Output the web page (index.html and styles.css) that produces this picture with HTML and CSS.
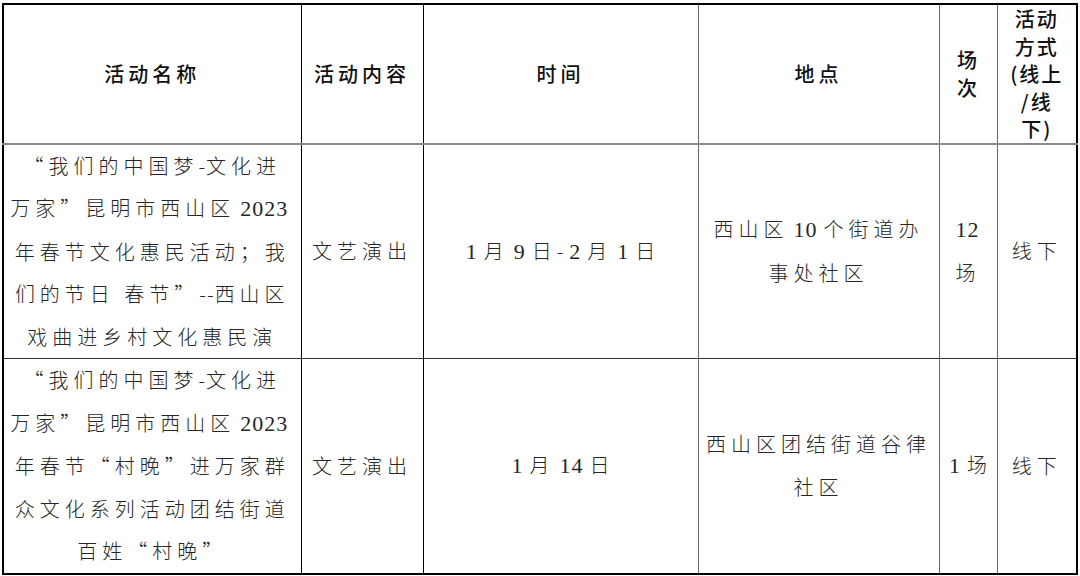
FILE: index.html
```html
<!DOCTYPE html>
<html lang="zh-CN">
<head>
<meta charset="utf-8">
<title>活动表</title>
<link rel="stylesheet" href="styles.css">
</head>
<body>
<table class="sheet">
  <colgroup>
    <col class="c-name">
    <col class="c-content">
    <col class="c-time">
    <col class="c-place">
    <col class="c-count">
    <col class="c-mode">
  </colgroup>
  <thead>
    <tr class="head-row">
      <th>活动名称</th>
      <th>活动内容</th>
      <th class="line-gray">时间</th>
      <th class="line-gray">地点</th>
      <th class="line-gray narrow">场<br>次</th>
      <th class="narrow">活动<br>方式<br>(线上<br>/线<br>下)</th>
    </tr>
  </thead>
  <tbody>
    <tr class="body-row">
      <td>“我们的中国梦<span class="dash">-</span>文化进<br>万家”昆明市西山区<span class="num">2023</span><br>年春节文化惠民活动；我<br>们的节日 春节”<span class="dash">--</span>西山区<br>戏曲进乡村文化惠民演</td>
      <td>文艺演出</td>
      <td class="line-gray"><span class="num">1</span>月<span class="num">9</span>日<span class="dash">-</span><span class="num">2</span>月<span class="num">1</span>日</td>
      <td class="line-gray">西山区<span class="num">10</span>个街道办<br>事处社区</td>
      <td class="line-gray"><span class="num">12</span><br>场</td>
      <td>线下</td>
    </tr>
    <tr class="body-row">
      <td>“我们的中国梦<span class="dash">-</span>文化进<br>万家”昆明市西山区<span class="num">2023</span><br>年春节“村晚”进万家群<br>众文化系列活动团结街道<br>百姓“村晚”</td>
      <td>文艺演出</td>
      <td class="line-gray"><span class="num">1</span>月<span class="num">14</span>日</td>
      <td class="line-gray">西山区团结街道谷律<br>社区</td>
      <td class="line-gray"><span class="num">1</span>场</td>
      <td>线下</td>
    </tr>
  </tbody>
</table>
</body>
</html>
```

FILE: styles.css
```css
html, body {
  margin: 0;
  padding: 0;
  background: #ffffff;
}

body {
  padding: 3px 0 0 2px;
  font-family: "Noto Sans CJK SC", "Liberation Serif", serif;
  color: #1e1e1e;
}

.sheet {
  border-collapse: collapse;
  table-layout: fixed;
  width: 1076px;
  border: 2px solid #000;
}

.c-name { width: 298px; }
.c-content { width: 122px; }
.c-time { width: 275px; }
.c-place { width: 241px; }
.c-count { width: 58px; }
.c-mode { width: 80px; }

.sheet th,
.sheet td {
  border-left: 1px solid #000;
  border-right: 1px solid #000;
  padding: 0;
  text-align: center;
  vertical-align: middle;
  overflow: hidden;
}

.sheet th.line-gray,
.sheet td.line-gray {
  border-right-color: #666;
}

.head-row {
  height: 135px;
}

.head-row th {
  font-size: 20px;
  font-weight: 500;
  letter-spacing: 4px;
  line-height: 27.5px;
  color: #111;
  border-bottom: 2px solid #8a8a8a;
}

.head-row th.narrow {
  letter-spacing: 2px;
}

.body-row {
  height: 214px;
}

.body-row td {
  font-size: 20px;
  font-weight: 300;
  letter-spacing: 5px;
  line-height: 42.5px;
  color: #262626;
  border-bottom: 1px solid #333;
}

.num {
  font-family: "Liberation Serif", serif;
  font-size: 22px;
  letter-spacing: 1px;
  margin: 0 6px 0 5px;
}

.dash {
  letter-spacing: 1px;
}
```
